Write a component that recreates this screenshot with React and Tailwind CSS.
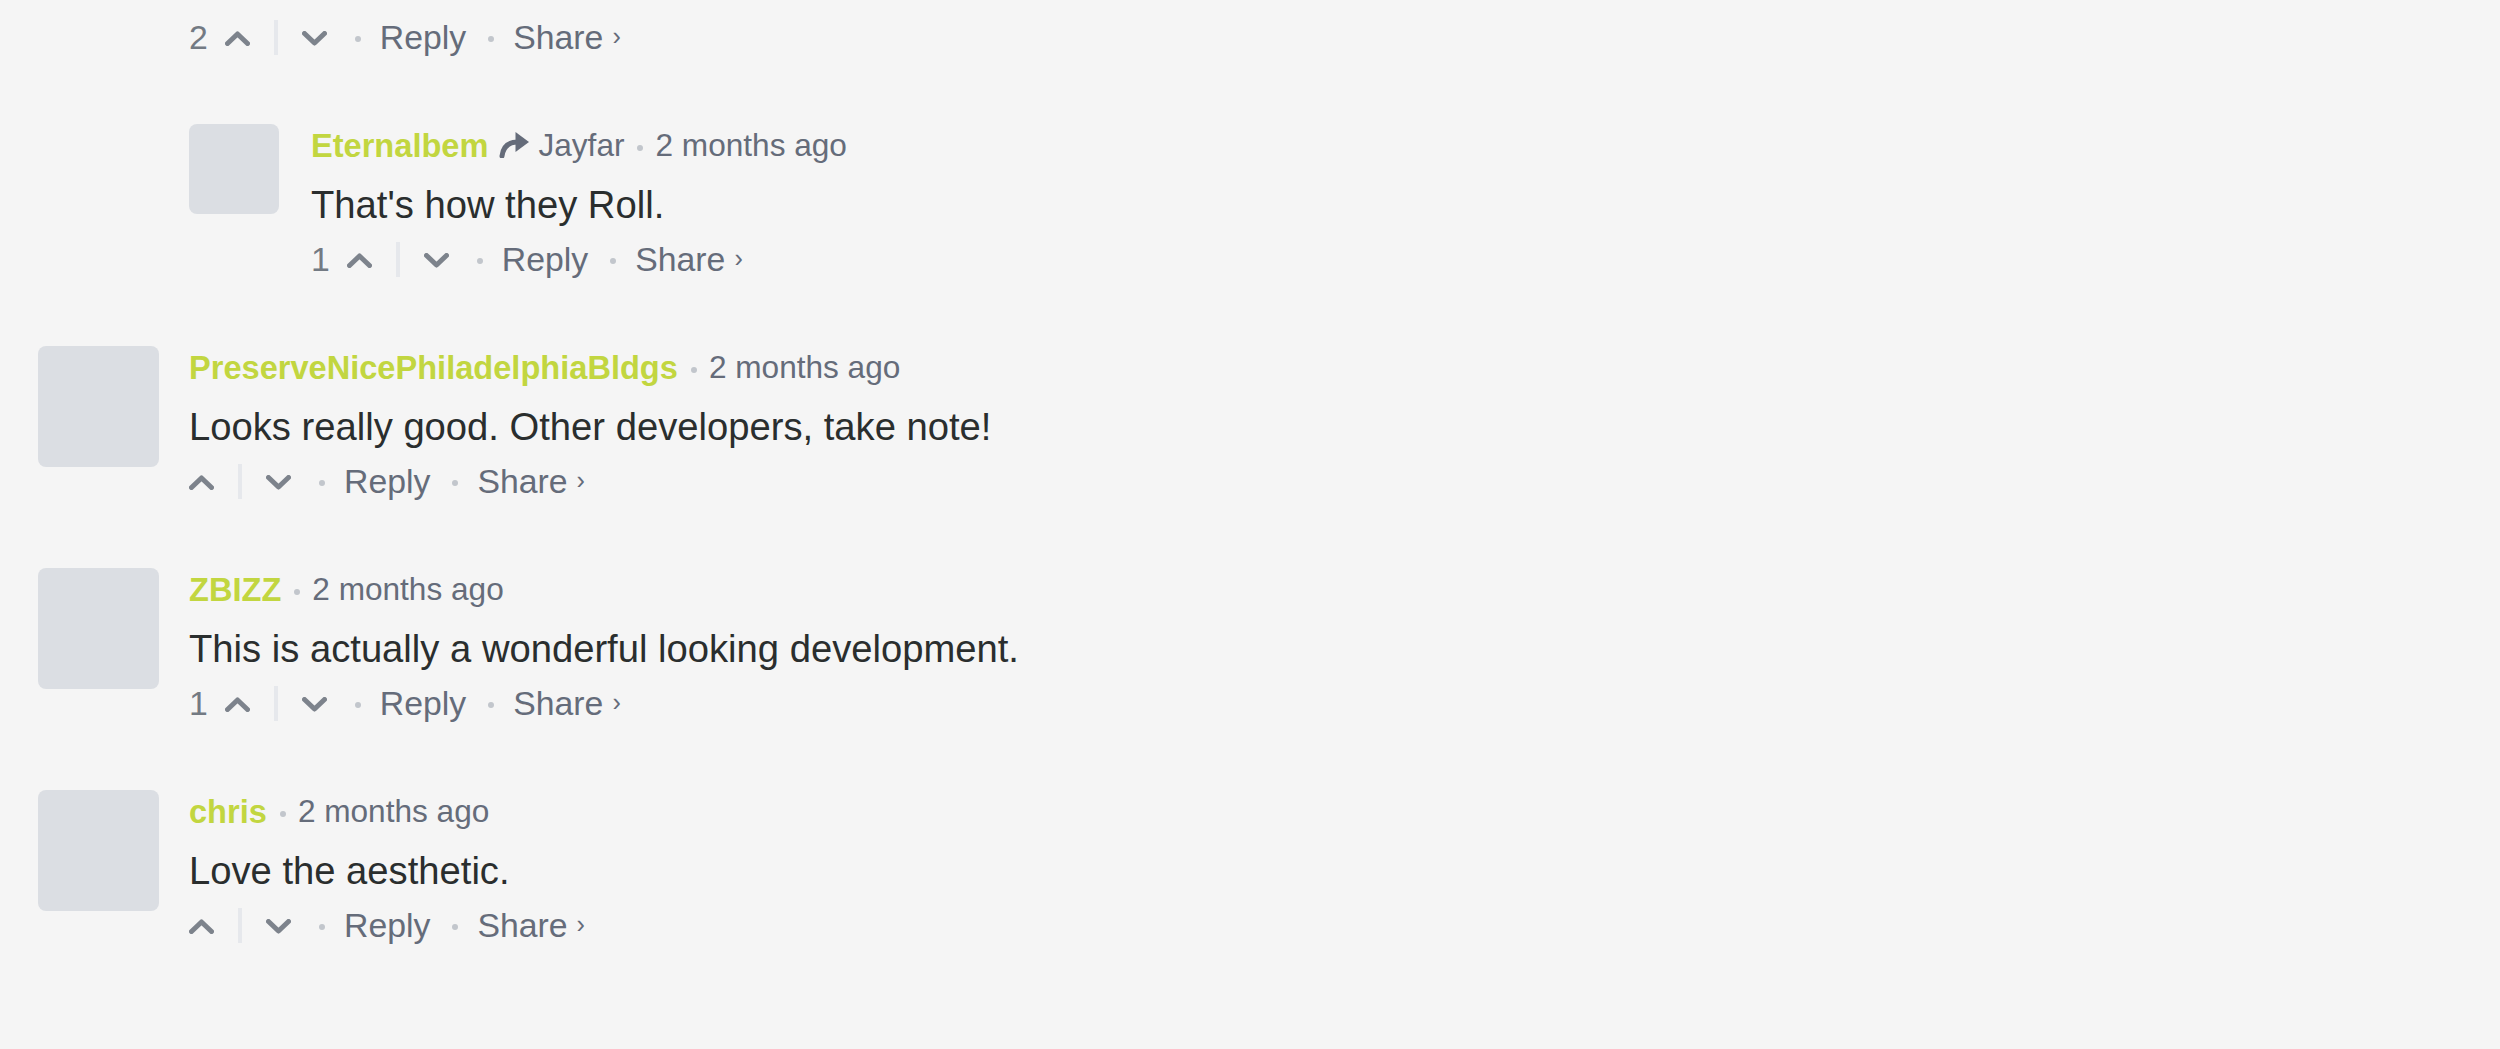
import React from 'react';

const comments = [
  { id: 2, name: 'PreserveNicePhiladelphiaBldgs', body: 'Looks really good. Other developers, take note!', votes: 0 },
  { id: 3, name: 'ZBIZZ', body: 'This is actually a wonderful looking development.', votes: 1 },
  { id: 4, name: 'chris', body: 'Love the aesthetic.', votes: 0 },
];

const Chevron = ({ up }) => (
  <svg width="25" height="15" viewBox="0 0 25 15" className="text-[#7d838c]">
    <polyline
      points={up ? '2.5,12.5 12.5,3 22.5,12.5' : '2.5,2.5 12.5,12 22.5,2.5'}
      fill="none"
      stroke="currentColor"
      strokeWidth="5"
      strokeLinecap="round"
      strokeLinejoin="round"
    />
  </svg>
);

const Dot = () => <span className="block w-[6px] h-[6px] rounded-full bg-[#c2c6cc]"></span>;

const ReplyArrow = () => (
  <svg width="31" height="27" viewBox="0 0 31 27" className="text-[#656c7a]">
    <path d="M3 25 C4 16.5 9 11 19 11" fill="none" stroke="currentColor" strokeWidth="5" strokeLinecap="round" />
    <path d="M16.5 1 L30 11 L16.5 21 Z" fill="currentColor" />
  </svg>
);

const Actions = ({ votes }) => (
  <div className="h-[44px] flex items-center text-[33.8px] text-[#656c7a]">
    {votes > 0 && <span className="text-[#737a83] mr-[17px]">{votes}</span>}
    <span className="mt-[3px]"><Chevron up /></span>
    <span className="block w-[4px] h-[35px] bg-[#e6e8ec] ml-[24px] mr-[24px]"></span>
    <span className="mt-[3px]"><Chevron /></span>
    <span className="ml-[28px] mr-[19px] mt-[4px]"><Dot /></span>
    <span>Reply</span>
    <span className="ml-[22px] mr-[19px] mt-[4px]"><Dot /></span>
    <span>Share</span>
    <span className="ml-[9px] text-[25px]">›</span>
  </div>
);

const Comment = ({ name, replyTo, body, votes, child }) => (
  <div className="flex">
    <div
      className={`shrink-0 rounded-[8px] bg-[#dbdee3] ${child ? 'w-[90px] h-[90px] mr-[32px]' : 'w-[121px] h-[121px] mr-[30px]'}`}
    ></div>
    <div className="flex flex-col">
      <div className="h-[44px] flex items-center">
        <span className="text-[32.6px] font-bold text-[#c2d640]">{name}</span>
        {replyTo && (
          <>
            <span className="ml-[11px] mr-[8px] -mt-[4px]"><ReplyArrow /></span>
            <span className="text-[31.6px] text-[#656c7a]">{replyTo}</span>
          </>
        )}
        <span className="ml-[13px] mr-[12px] mt-[3px]"><Dot /></span>
        <span className="text-[31.6px] text-[#656c7a]">2 months ago</span>
      </div>
      <p className="mt-[12px] text-[38.2px] leading-[50px] text-[#2a2e2e]">{body}</p>
      <div className="mt-[7px]">
        <Actions votes={votes} />
      </div>
    </div>
  </div>
);

const App = () => {
  return (
    <div className="min-h-screen bg-[#f5f5f5] font-['Liberation_Sans',Arial,sans-serif]">
      <div className="pt-[15px] pl-[38px] flex flex-col gap-[65px]">
        <div className="pl-[151px]">
          <Actions votes={2} />
        </div>
        <div className="pl-[151px]">
          <Comment child name="Eternalbem" replyTo="Jayfar" body="That's how they Roll." votes={1} />
        </div>
        {comments.map((c) => (
          <Comment key={c.id} name={c.name} body={c.body} votes={c.votes} />
        ))}
      </div>
    </div>
  );
};

export default App;
